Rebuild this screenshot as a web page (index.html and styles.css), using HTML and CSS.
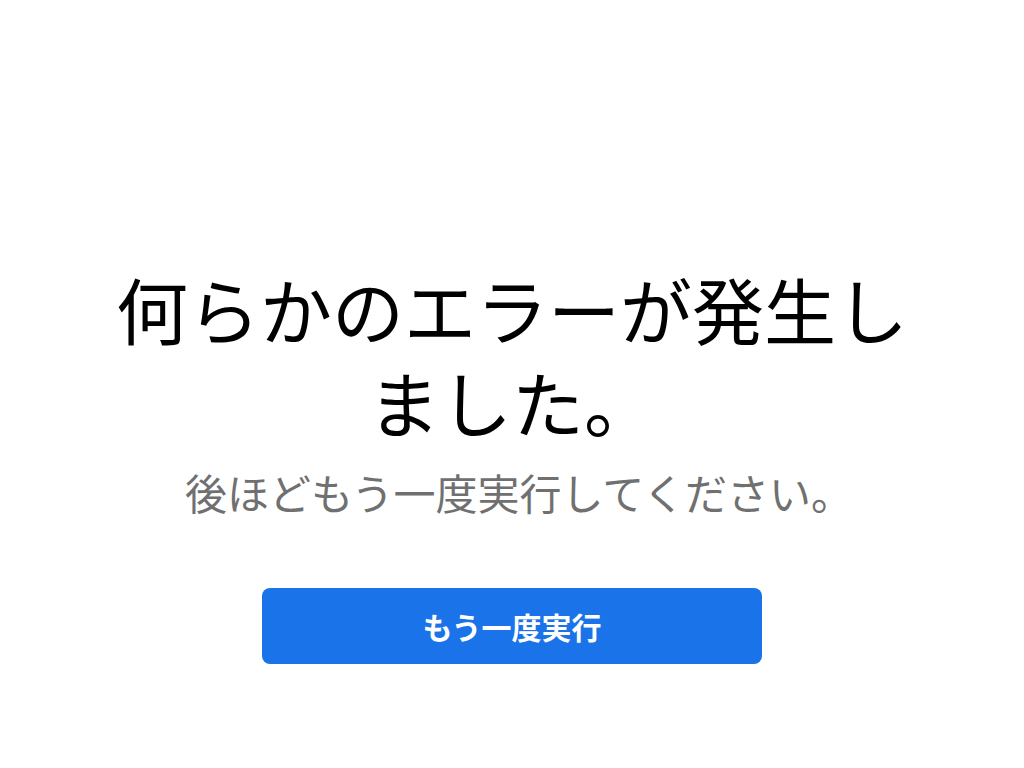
FILE: index.html
```
<!DOCTYPE html>
<html lang="ja">
<head>
    <meta charset="UTF-8">
    <meta name="viewport" content="width=device-width, initial-scale=1.0">
    <title>エラー</title>
    <link rel="stylesheet" href="styles.css">
</head>
<body>
    <main class="error-page">
        <h1 class="error-title">何らかのエラーが発生しました。</h1>
        <p class="error-message">後ほどもう一度実行してください。</p>
        <button class="retry-button" type="button">もう一度実行</button>
    </main>
</body>
</html>
```

FILE: styles.css
```
body {
    margin: 0;
    background-color: #ffffff;
    font-family: "Noto Sans CJK JP", "Noto Sans", sans-serif;
}
.error-page {
    width: 820px;
    margin: 0 auto;
    padding-top: 261px;
    display: flex;
    flex-direction: column;
    align-items: center;
    text-align: center;
}
.error-title {
    margin: 0;
    font-size: 72px;
    line-height: 93px;
    font-weight: 400;
    color: #000000;
}
.error-message {
    margin: 17px 0 0;
    padding-left: 14px;
    font-size: 42px;
    line-height: 55px;
    color: #707070;
}
.retry-button {
    margin-top: 69px;
    width: 500px;
    height: 76px;
    border: none;
    border-radius: 8px;
    background-color: #1a73e8;
    color: #ffffff;
    font-family: inherit;
    font-size: 30px;
    font-weight: 700;
    cursor: pointer;
}
```
